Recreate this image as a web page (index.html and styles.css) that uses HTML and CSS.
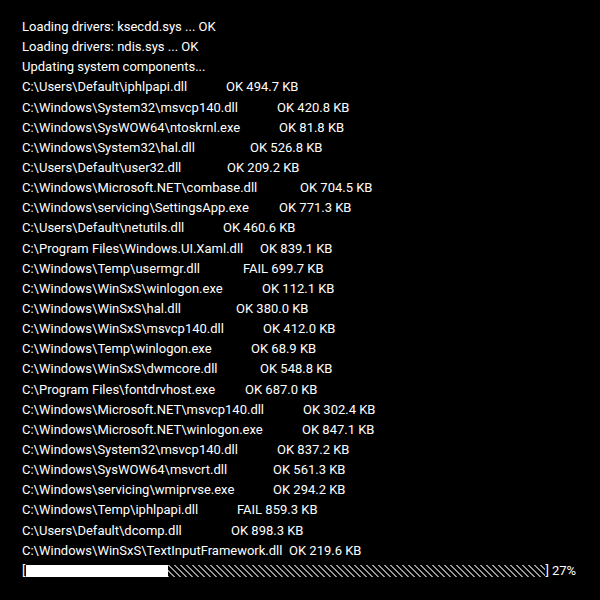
FILE: index.html
```html
<!DOCTYPE html>
<html>
<head>
<meta charset="utf-8">
<link rel="stylesheet" href="styles.css">
</head>
<body>
<div class="console">
  <div class="line">Loading drivers: ksecdd.sys ... OK</div>
  <div class="line">Loading drivers: ndis.sys ... OK</div>
  <div class="line">Updating system components...</div>
  <div class="line"><span class="path" style="width:204px">C:\Users\Default\iphlpapi.dll</span><span>OK 494.7 KB</span></div>
  <div class="line"><span class="path" style="width:255px">C:\Windows\System32\msvcp140.dll</span><span>OK 420.8 KB</span></div>
  <div class="line"><span class="path" style="width:257px">C:\Windows\SysWOW64\ntoskrnl.exe</span><span>OK 81.8 KB</span></div>
  <div class="line"><span class="path" style="width:228px">C:\Windows\System32\hal.dll</span><span>OK 526.8 KB</span></div>
  <div class="line"><span class="path" style="width:205px">C:\Users\Default\user32.dll</span><span>OK 209.2 KB</span></div>
  <div class="line"><span class="path" style="width:278px">C:\Windows\Microsoft.NET\combase.dll</span><span>OK 704.5 KB</span></div>
  <div class="line"><span class="path" style="width:257px">C:\Windows\servicing\SettingsApp.exe</span><span>OK 771.3 KB</span></div>
  <div class="line"><span class="path" style="width:201px">C:\Users\Default\netutils.dll</span><span>OK 460.6 KB</span></div>
  <div class="line"><span class="path" style="width:238px">C:\Program Files\Windows.UI.Xaml.dll</span><span>OK 839.1 KB</span></div>
  <div class="line"><span class="path" style="width:221px">C:\Windows\Temp\usermgr.dll</span><span>FAIL 699.7 KB</span></div>
  <div class="line"><span class="path" style="width:240px">C:\Windows\WinSxS\winlogon.exe</span><span>OK 112.1 KB</span></div>
  <div class="line"><span class="path" style="width:214px">C:\Windows\WinSxS\hal.dll</span><span>OK 380.0 KB</span></div>
  <div class="line"><span class="path" style="width:241px">C:\Windows\WinSxS\msvcp140.dll</span><span>OK 412.0 KB</span></div>
  <div class="line"><span class="path" style="width:229px">C:\Windows\Temp\winlogon.exe</span><span>OK 68.9 KB</span></div>
  <div class="line"><span class="path" style="width:238px">C:\Windows\WinSxS\dwmcore.dll</span><span>OK 548.8 KB</span></div>
  <div class="line"><span class="path" style="width:223px">C:\Program Files\fontdrvhost.exe</span><span>OK 687.0 KB</span></div>
  <div class="line"><span class="path" style="width:281px">C:\Windows\Microsoft.NET\msvcp140.dll</span><span>OK 302.4 KB</span></div>
  <div class="line"><span class="path" style="width:280px">C:\Windows\Microsoft.NET\winlogon.exe</span><span>OK 847.1 KB</span></div>
  <div class="line"><span class="path" style="width:255px">C:\Windows\System32\msvcp140.dll</span><span>OK 837.2 KB</span></div>
  <div class="line"><span class="path" style="width:251px">C:\Windows\SysWOW64\msvcrt.dll</span><span>OK 561.3 KB</span></div>
  <div class="line"><span class="path" style="width:251px">C:\Windows\servicing\wmiprvse.exe</span><span>OK 294.2 KB</span></div>
  <div class="line"><span class="path" style="width:215px">C:\Windows\Temp\iphlpapi.dll</span><span>FAIL 859.3 KB</span></div>
  <div class="line"><span class="path" style="width:209px">C:\Users\Default\dcomp.dll</span><span>OK 898.3 KB</span></div>
  <div class="line"><span class="path" style="width:267px">C:\Windows\WinSxS\TextInputFramework.dll</span><span>OK 219.6 KB</span></div>
  <div class="line progress">
    <span class="bracket">[</span>
    <div class="track"><div class="fill" style="width:27.3%"></div><div class="rest"></div></div>
    <span class="bracket">]</span>
    <span class="pct">27%</span>
  </div>
</div>
</body>
</html>
```
FILE: styles.css
```css
html, body {
  margin: 0;
  padding: 0;
  background: #000;
}
body {
  width: 600px;
  height: 600px;
  overflow: hidden;
}
.console {
  padding: 17px 0 0 22px;
  font-family: Roboto, "Noto Sans", sans-serif;
  font-size: 13px;
  line-height: 20.15px;
  color: #fff;
}
.line {
  white-space: pre;
  display: flex;
  align-items: center;
  height: 20.15px;
}
.path {
  flex: none;
}
.progress {
  align-items: center;
}
.bracket {
  flex: none;
}
.track {
  display: flex;
  width: 519px;
  height: 12px;
  margin-left: 1px;
  flex: none;
}
.fill {
  background: #fff;
  height: 100%;
  flex: none;
}
.rest {
  flex: 1;
  height: 100%;
  background: repeating-linear-gradient(45deg, #9a9a9a 0, #9a9a9a 1.3px, transparent 1.3px, transparent 4.24px);
}
.pct {
  margin-left: 3px;
}
```
